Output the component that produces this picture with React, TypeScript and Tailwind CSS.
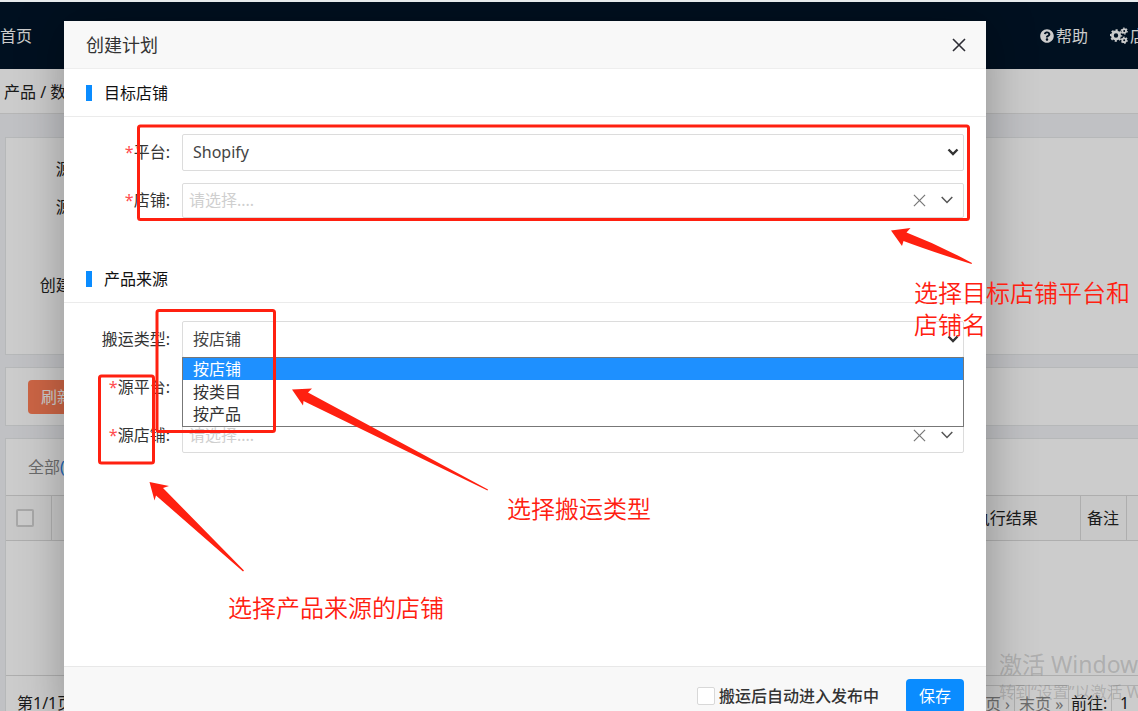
import type { ReactNode } from "react";
import { FaQuestionCircle } from "react-icons/fa";

function Gears() {
  return (
    <svg width="18" height="18" viewBox="0 0 18 18" fill="none" stroke="currentColor">
      <circle cx="6" cy="8.500" r="3.600" strokeWidth="2.800" />
      <circle cx="6" cy="8.500" r="5.400" strokeWidth="1.800" strokeDasharray="2.120 2.121" strokeDashoffset="1.060" />
      <circle cx="14.200" cy="4" r="1.900" strokeWidth="1.800" />
      <circle cx="14.200" cy="4" r="3" strokeWidth="1.200" strokeDasharray="1.570 1.571" />
      <circle cx="14.200" cy="13.200" r="1.900" strokeWidth="1.800" />
      <circle cx="14.200" cy="13.200" r="3" strokeWidth="1.200" strokeDasharray="1.570 1.571" />
    </svg>
  );
}

function Cross({ size, width }: { size: number; width: number }) {
  return (
    <svg width={size} height={size} viewBox="0 0 14 14" fill="none" stroke="currentColor" strokeWidth={width}>
      <path d="M1 1 L13 13 M13 1 L1 13" />
    </svg>
  );
}

function Chevron({ bold }: { bold?: boolean }) {
  return (
    <svg width="12" height="8" viewBox="0 0 12 8" fill="none" stroke="currentColor" strokeWidth={bold ? 2.4 : 1.5}>
      {bold ? <path d="M1.500 1.500 L6 6 L10.500 1.500" /> : <path d="M0.700 1 L6 6.500 L11.300 1" />}
    </svg>
  );
}

function SectionTitle({ children }: { children: ReactNode }) {
  return (
    <h3 className="flex h-12 items-center gap-3 border-b border-[#ebebeb] pl-[22px] text-[#111]">
      <span className="h-4 w-1.5 bg-[#0a8cff]" />
      {children}
    </h3>
  );
}

function Row({ id, label, required, children }: { id: string; label: string; required?: boolean; children: ReactNode }) {
  return (
    <div className="flex h-12 items-center gap-3 pr-[22px]">
      <label htmlFor={id} className="w-[106px] shrink-0 text-right">
        {required && <span className="text-[#ff4d4f]">*</span>}
        {label}:
      </label>
      <div className="relative min-w-0 flex-1">{children}</div>
    </div>
  );
}

function NativeSelect({ id, options }: { id: string; options: string[] }) {
  return (
    <>
      <select id={id} className="block h-[37px] w-full appearance-none rounded-xs border border-[#dcdcdc] bg-white pl-2.5 text-[#444]">
        {options.map((o) => (
          <option key={o}>{o}</option>
        ))}
      </select>
      <span className="pointer-events-none absolute top-1/2 right-[5px] -translate-y-1/2 text-[#333]">
        <Chevron bold />
      </span>
    </>
  );
}

function MultiSelect({ id }: { id: string }) {
  return (
    <div className="flex h-[35px] items-center rounded-xs border border-[#dcdcdc] bg-white pr-2.5 pl-1.5 text-[#555]">
      <input id={id} placeholder="请选择...." className="min-w-0 flex-1 outline-none placeholder:text-[#cfcfcf]" />
      <button type="button" aria-label="清除" className="mr-[15px] text-[#777]">
        <Cross size={13} width={1.3} />
      </button>
      <button type="button" aria-label="展开">
        <Chevron />
      </button>
    </div>
  );
}

function Page() {
  return (
    <div className="flex h-full flex-col overflow-hidden bg-[#f0f2f5]">
      <nav className="flex h-[67px] shrink-0 items-center justify-between bg-[#001529] text-white">
        <a href="#home">首页</a>
        <div className="flex w-[98px] gap-[22px] whitespace-nowrap">
          <a href="#help" className="flex shrink-0 items-center gap-0.5">
            <FaQuestionCircle size={14} />
            帮助
          </a>
          <a href="#shops" className="flex shrink-0 items-center gap-0.5">
            <Gears />
            店铺
          </a>
        </div>
      </nav>
      <div className="h-[45px] shrink-0 border-b border-[#e4e4e4] bg-white pl-1 leading-[46px]">产品 / 数据</div>
      <main className="mt-[23px] flex flex-col gap-3 pl-[5px]">
        <section className="h-[218px] border border-r-0 border-[#e4e6e8] bg-white pt-3">
          <div className="w-[102px] text-right leading-[38px]">
            <p>源平台:</p>
            <p>源店铺:</p>
            <p className="mt-10">创建时间:</p>
          </div>
        </section>
        <section className="flex h-[59px] items-center border border-r-0 border-[#e4e6e8] bg-white pl-[22px]">
          <button type="button" className="h-[34px] rounded-sm bg-[#ff7f57] px-[13px] text-white">
            刷新
          </button>
        </section>
        <section className="border border-r-0 border-[#e4e6e8] bg-white">
          <div className="h-14 pl-[22px] leading-[57px] text-[#888]">
            全部<span className="text-[#1e80e8]">(0)</span>
          </div>
          <table className="w-full table-fixed border-collapse border-y border-[#dadada]">
            <thead>
              <tr className="h-[45px] border-b border-[#dadada] bg-[#fafafa]">
                <th className="w-[45px] border-r border-[#dadada] text-left">
                  <input type="checkbox" aria-label="全选" className="ml-2.5 block size-[18px] appearance-none rounded-xs border-2 border-[#d2d2d2] bg-white" />
                </th>
                <th />
                <th className="w-[148px] border-r border-[#dadada] text-center font-normal">执行结果</th>
                <th className="w-[46px] border-r border-[#dadada] text-center font-normal">备注</th>
                <th className="w-3" />
              </tr>
            </thead>
            <tbody>
              <tr className="h-[135px]">
                <td colSpan={5} />
              </tr>
            </tbody>
          </table>
          <div className="flex items-start justify-between pt-[9px] pl-[11px] leading-9 whitespace-nowrap">
            <span>第1/1页</span>
            <div className="flex w-[182px] text-[#888]">
              <a href="#next" className="w-[59px] shrink-0 border border-[#dadada] pr-1 text-right">
                下页 ›
              </a>
              <a href="#last" className="w-[54px] shrink-0 border border-l-0 border-[#dadada] pl-1">
                末页 »
              </a>
              <label htmlFor="page" className="w-[42px] shrink-0 pl-0.5 text-[#222]">
                前往:
              </label>
              <input id="page" defaultValue="1" className="h-9 w-12 shrink-0 border border-[#dadada] pl-2 text-[#222]" />
            </div>
          </div>
        </section>
      </main>
    </div>
  );
}

function Dialog() {
  const kinds = ["按店铺", "按类目", "按产品"];
  return (
    <div role="dialog" aria-label="创建计划" className="absolute top-[19px] right-[152px] left-16 rounded-xs bg-white text-[#333] shadow-[1px_1px_50px_rgba(0,0,0,0.3)]">
      <header className="flex h-12 items-center justify-between border-b border-[#eee] bg-[#f8f8f8] pr-5 pl-[22px]">
        <h2 className="text-lg">创建计划</h2>
        <button type="button" aria-label="关闭" className="text-[#2d2d35]">
          <Cross size={14} width={1.6} />
        </button>
      </header>
      <form>
        <SectionTitle>目标店铺</SectionTitle>
        <div className="pt-[11px] pb-[31px]">
          <Row id="platform" label="平台" required>
            <NativeSelect id="platform" options={["Shopify"]} />
          </Row>
          <Row id="shop" label="店铺" required>
            <MultiSelect id="shop" />
          </Row>
        </div>
        <SectionTitle>产品来源</SectionTitle>
        <div className="pt-3 pb-[207px]">
          <Row id="kind" label="搬运类型">
            <NativeSelect id="kind" options={kinds} />
            <ul className="absolute top-full right-0 left-0 z-10 -mt-px flex h-[70px] flex-col border border-[#777] bg-white">
              {kinds.map((k, i) => (
                <li key={k} className={i === 0 ? "flex flex-1 items-center bg-[#1e90ff] pl-2.5 leading-none text-white" : "flex flex-1 items-center pl-2.5 leading-none"}>
                  {k}
                </li>
              ))}
            </ul>
          </Row>
          <Row id="source-platform" label="源平台" required>
            <NativeSelect id="source-platform" options={["Shopify"]} />
          </Row>
          <Row id="source-shop" label="源店铺" required>
            <MultiSelect id="source-shop" />
          </Row>
        </div>
        <footer className="flex h-[58px] items-center justify-end border-t border-[#e8e8e8] bg-[#f8f8f8] pr-[22px]">
          <label className="mr-[27px] flex items-center gap-1 font-medium">
            <input type="checkbox" className="size-[18px] appearance-none rounded-xs border border-[#d8d8d8] bg-white" />
            搬运后自动进入发布中
          </label>
          <button type="button" className="h-[34px] rounded-sm bg-[#0a8cff] px-[13px] text-white">
            保存
          </button>
        </footer>
      </form>
    </div>
  );
}

function Annotations() {
  return (
    <div className="pointer-events-none absolute inset-0 z-20 overflow-hidden text-2xl leading-8 font-[350] whitespace-nowrap text-[#ff2010]">
      <svg className="absolute inset-0 size-full">
        <g fill="none" stroke="#ff2010" strokeWidth="3">
          <rect x="138.500" y="126" width="830" height="93.500" rx="2" />
          <rect x="157" y="310.500" width="117.500" height="121" rx="2" />
          <rect x="99.500" y="376" width="54" height="87" rx="2" />
        </g>
        <g fill="#ff2010">
          <path d="M891 230.500 L910.500 228 L906.500 232.500 Q939 245 972 263 L971.500 264 Q930 251 903.500 241 L902 246 Z" />
          <path d="M292 389.500 L312 388.500 L308 392.500 L488 489.500 L487.500 490.500 L303.500 401 L303 405.500 Z" />
          <path d="M149.500 482 L169 486 L163 488 L244 570.500 L243 571.500 L156 495.500 L154.500 500.500 Z" />
        </g>
      </svg>
      <p className="absolute top-[277px] left-[914px]">
        选择目标店铺平台和
        <br />
        店铺名
      </p>
      <p className="absolute top-[493px] left-[507px]">选择搬运类型</p>
      <p className="absolute top-[592px] left-[228px]">选择产品来源的店铺</p>
    </div>
  );
}

export default function App() {
  return (
    <div className="relative flex h-screen flex-col overflow-hidden font-['Noto_Sans','Noto_Sans_CJK_SC',sans-serif] text-base text-[#222]">
      <div className="h-0.5 shrink-0 bg-[#e6eaec]" />
      <div className="relative min-h-0 flex-1 overflow-hidden">
        <Page />
        <div className="absolute inset-0 bg-black/20" />
        <div className="absolute right-0 bottom-[7px] w-[139px] whitespace-nowrap text-[#666]/30">
          <p className="text-[23px] leading-8">激活 Windows</p>
          <p className="leading-6">转到“设置”以激活 Windows。</p>
        </div>
        <Dialog />
      </div>
      <Annotations />
    </div>
  );
}
